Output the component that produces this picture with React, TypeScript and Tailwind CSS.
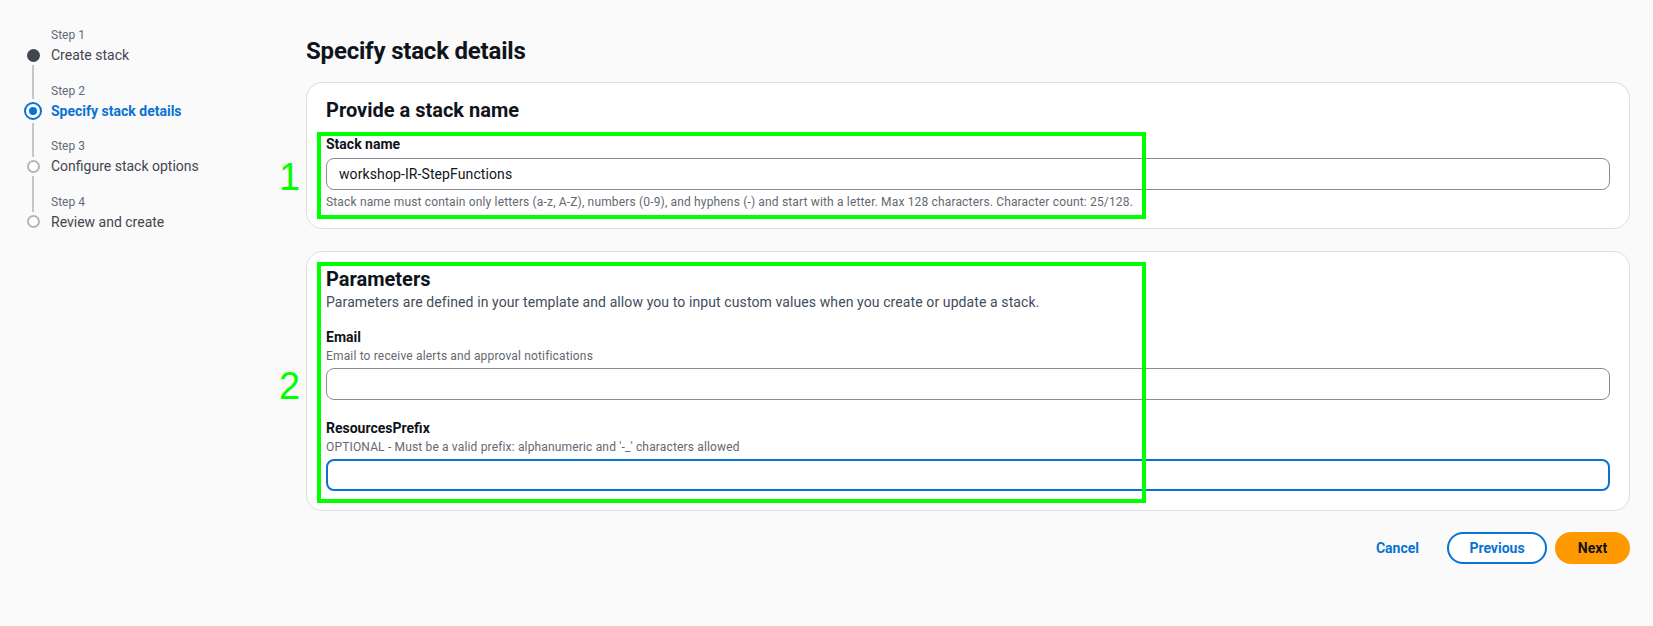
import React from "react";

type StepState = "done" | "active" | "todo";

const steps: { n: number; title: string; state: StepState }[] = [
  { n: 1, title: "Create stack", state: "done" },
  { n: 2, title: "Specify stack details", state: "active" },
  { n: 3, title: "Configure stack options", state: "todo" },
  { n: 4, title: "Review and create", state: "todo" },
];

function StepCircle({ state }: { state: StepState }) {
  if (state === "done") {
    return <div className="h-[13px] w-[13px] shrink-0 rounded-full bg-[#424650]" />;
  }
  if (state === "active") {
    return (
      <div className="flex h-[18px] w-[18px] shrink-0 items-center justify-center rounded-full border-2 border-[#0972d3] bg-white">
        <div className="h-[8px] w-[8px] rounded-full bg-[#0972d3]" />
      </div>
    );
  }
  return <div className="h-[13px] w-[13px] shrink-0 rounded-full border-2 border-[#b4b4bb] bg-white" />;
}

export default function App() {
  return (
    <div className="relative flex h-[626px] w-full overflow-hidden bg-[#fafafa] font-['Roboto','Liberation_Sans',sans-serif] text-[#0f141a]">
      {/* Sidebar wizard steps */}
      <aside className="w-[306px] shrink-0 pl-[23px] pt-[27px]">
        {steps.map((s, i) => {
          const r = s.state === "active" ? 9 : 6.5;
          return (
            <div key={s.n} className="flex h-[55.5px] gap-2">
              <div className="flex w-5 flex-col items-center">
                <div
                  className={`mb-[3px] w-[2px] ${i === 0 ? "" : "bg-[#c6c6cd]"}`}
                  style={{ height: 28 - r - 3 }}
                />
                <StepCircle state={s.state} />
                <div className={`mt-[3px] w-[2px] flex-1 ${i === steps.length - 1 ? "" : "bg-[#c6c6cd]"}`} />
              </div>
              <div>
                <div className="text-xs leading-4 text-[#5f6b7a]">Step {s.n}</div>
                <div
                  className={`mt-0.5 text-sm leading-5 ${
                    s.state === "active" ? "font-bold text-[#0972d3]" : "text-[#424650]"
                  }`}
                >
                  {s.title}
                </div>
              </div>
            </div>
          );
        })}
      </aside>

      {/* Main content */}
      <main className="flex-1 pr-[23px] pt-[37px]">
        <h1 className="text-2xl font-bold leading-7 tracking-[-0.2px]">Specify stack details</h1>

        <section className="mt-[17px] rounded-2xl border border-[#dedee3] bg-white px-[19px] pb-[18px] pt-[15px]">
          <h2 className="text-xl font-bold leading-6">Provide a stack name</h2>
          <div className="mt-3 text-sm font-bold leading-5">Stack name</div>
          <div className="mt-1 flex h-8 items-center rounded-lg border border-[#8c8c94] bg-white px-3 text-sm tracking-[0.1px]">
            workshop-IR-StepFunctions
          </div>
          <div className="mt-1 text-xs leading-4 tracking-[0.16px] text-[#656871]">
            Stack name must contain only letters (a-z, A-Z), numbers (0-9), and hyphens (-) and start with a letter.
            Max 128 characters. Character count: 25/128.
          </div>
        </section>

        <section className="mt-[22px] rounded-2xl border border-[#dedee3] bg-white px-[19px] pb-[19px] pt-[15px]">
          <h2 className="text-xl font-bold leading-6">Parameters</h2>
          <div className="text-sm leading-[22px] tracking-[0.1px] text-[#414d5c]">
            Parameters are defined in your template and allow you to input custom values when you create or update a
            stack.
          </div>

          <div className="mt-[14px] text-sm font-bold leading-5">Email</div>
          <div className="mt-px text-xs leading-4 tracking-[0.16px] text-[#656871]">
            Email to receive alerts and approval notifications
          </div>
          <div className="mt-1 h-8 rounded-lg border border-[#8c8c94] bg-white" />

          <div className="mt-[18px] text-sm font-bold leading-5">ResourcesPrefix</div>
          <div className="mt-px text-xs leading-4 tracking-[0.16px] text-[#656871]">
            OPTIONAL - Must be a valid prefix: alphanumeric and '-_' characters allowed
          </div>
          <div className="mt-1 h-8 rounded-lg border-2 border-[#0972d3] bg-white" />
        </section>

        <div className="mt-[21px] flex justify-end gap-2">
          <button className="h-8 px-5 text-sm font-bold text-[#0972d3]">Cancel</button>
          <button className="h-8 w-[100px] rounded-full border-2 border-[#0972d3] bg-white text-sm font-bold text-[#0972d3]">
            Previous
          </button>
          <button className="h-8 w-[75px] rounded-full bg-[#ff9900] text-sm font-bold text-[#0f141a]">Next</button>
        </div>
      </main>

      {/* Green annotation overlays */}
      <div className="pointer-events-none absolute left-[317px] top-[132px] h-[87px] w-[829px] border-4 border-[#00ff00]" />
      <div className="pointer-events-none absolute left-[317px] top-[262px] h-[241px] w-[829px] border-4 border-[#00ff00]" />
      <span className="pointer-events-none absolute left-[279px] top-[158px] font-['Liberation_Sans',sans-serif] text-[38px] leading-none text-[#00ff00]">
        1
      </span>
      <span className="pointer-events-none absolute left-[279px] top-[367px] font-['Liberation_Sans',sans-serif] text-[38px] leading-none text-[#00ff00]">
        2
      </span>
    </div>
  );
}
